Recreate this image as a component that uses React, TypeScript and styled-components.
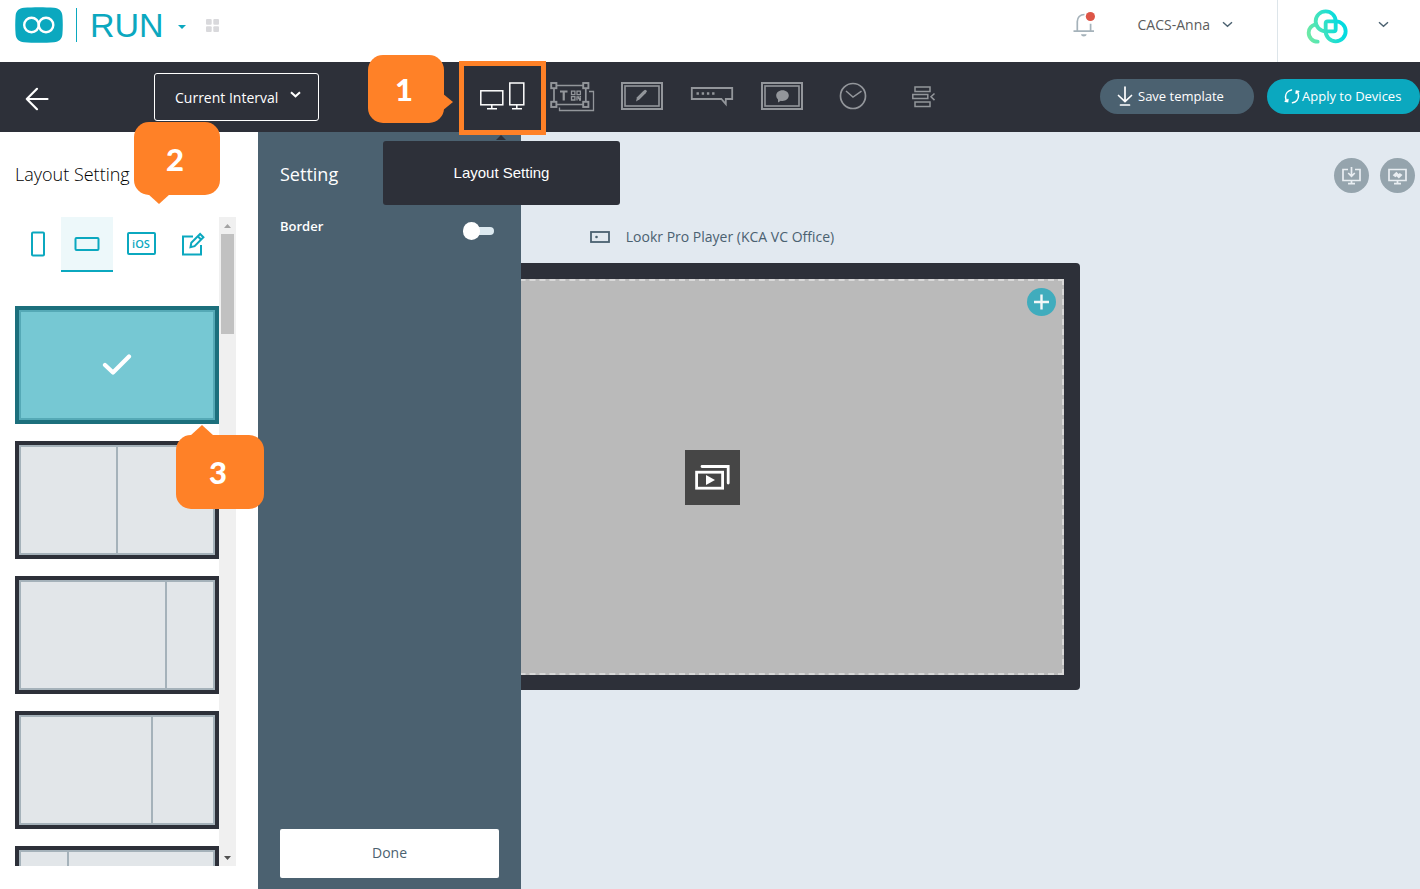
import React from "react";
import styled, { createGlobalStyle } from "styled-components";

const color = {
  teal: "#0ba8bf",
  dark: "#2d3039",
  slate: "#4b6170",
  stage: "#e2e9f0",
  orange: "#ff8127",
  tool: "#93969b",
};

const GlobalStyle = createGlobalStyle`
  *, *::before, *::after { box-sizing: border-box; }
  body { margin: 0; font-family: "Open Sans", "Noto Sans", sans-serif; background: #fff; }
  button, select, input { font-family: inherit; margin: 0; }
  button { border: 0; padding: 0; background: none; cursor: pointer; }
  svg { display: block; flex: none; }
  h2, p { margin: 0; font-weight: 400; }
`;

const Page = styled.div`
  display: flex;
  flex-direction: column;
  height: 100vh;
  overflow: hidden;
`;

const Header = styled.header`
  display: flex;
  align-items: flex-start;
  flex: none;
  height: 62px;
  padding-left: 15px;
`;

const Brand = styled.a`
  display: flex;
  align-items: center;
  height: 50px;
  color: ${color.teal};
  text-decoration: none;
`;

const BrandName = styled.span`
  margin-left: 13px;
  padding-left: 13px;
  border-left: 1px solid ${color.teal};
  font: 34px/34px "Liberation Sans", Arial, sans-serif;
`;

const HeaderIcon = styled.button<{ $gap?: number }>`
  display: flex;
  align-items: center;
  height: 50px;
  margin-left: ${(p) => p.$gap ?? 0}px;
`;

const HeaderStart = styled.div`
  display: flex;
  flex: 1;
  align-items: center;
`;

const Account = styled.button`
  display: flex;
  align-items: center;
  gap: 12px;
  height: 48px;
  margin: 0 44px 0 43px;
  color: #5c5c5c;
  font-size: 14px;
`;

const Workspace = styled.button`
  display: flex;
  align-items: flex-start;
  justify-content: space-between;
  width: 143px;
  height: 62px;
  padding: 8px 31px 0 28px;
  border-left: 1px solid #dde5ea;
`;

const ChevronSlot = styled.span`
  display: flex;
  padding-top: 13px;
`;

const Toolbar = styled.div`
  display: grid;
  grid-template-columns: 1fr auto 1fr;
  flex: none;
  align-items: center;
  height: 70px;
  padding-left: 4px;
  background: ${color.dark};
`;

const ToolbarStart = styled.div`
  display: flex;
  align-items: center;
  padding-left: 20px;
`;

const BackButton = styled.button`
  display: flex;
  align-items: center;
  height: 48px;
  margin-right: 104px;
  padding-top: 4px;
`;

const SelectBox = styled.label`
  position: relative;
`;

const Select = styled.select`
  display: block;
  width: 165px;
  height: 48px;
  padding: 0 20px;
  appearance: none;
  border: 1px solid #fff;
  border-radius: 3px;
  background: transparent;
  color: #fff;
  font-size: 14px;
  font-weight: 500;
`;

const SelectArrow = styled.span`
  position: absolute;
  top: 18px;
  right: 18px;
  pointer-events: none;
`;

const Tools = styled.nav`
  display: flex;
`;

const ToolItem = styled.div`
  position: relative;
`;

const ToolButton = styled.button`
  display: flex;
  align-items: center;
  justify-content: center;
  width: 70px;
  height: 70px;
`;

const Highlight = styled.span`
  position: absolute;
  top: -1px;
  left: -8px;
  z-index: 6;
  width: 87px;
  height: 74px;
  border: 5px solid ${color.orange};
  pointer-events: none;
`;

const Tooltip = styled.div`
  position: absolute;
  top: 79px;
  left: -84px;
  z-index: 5;
  width: 237px;
  border-radius: 3px;
  background: ${color.dark};
  color: #fff;
  font: 15px/64px "Liberation Sans", Arial, sans-serif;
  text-align: center;

  &::before {
    content: "";
    position: absolute;
    top: -6px;
    left: 113px;
    border: 5px solid transparent;
    border-top: 0;
    border-bottom-color: ${color.dark};
  }
`;

const tails = {
  right: "top: 38px; left: 100%; margin-left: -2px; border-width: 9px 0 9px 11px; border-left-color: currentColor;",
  down: "top: 100%; left: 14px; margin-top: -1px; border-width: 10px 11px 0 11px; border-top-color: currentColor;",
  up: "bottom: 100%; left: 14px; margin-bottom: -1px; border-width: 0 12px 11px 12px; border-bottom-color: currentColor;",
};

const CalloutBox = styled.div<{ $x: number; $y: number; $w: number; $h: number; $tail: keyof typeof tails }>`
  position: absolute;
  top: ${(p) => p.$y}px;
  left: ${(p) => p.$x}px;
  z-index: 6;
  display: flex;
  align-items: center;
  justify-content: center;
  width: ${(p) => p.$w}px;
  height: ${(p) => p.$h}px;
  padding-right: 4px;
  border-radius: 15px;
  background: ${color.orange};
  color: ${color.orange};

  &::after {
    content: "";
    position: absolute;
    border: 0 solid transparent;
    ${(p) => tails[p.$tail]}
  }
`;

const CalloutNumber = styled.span`
  color: #fff;
  font: 900 31px/40px Lato, sans-serif;
`;

const ToolbarEnd = styled.div`
  display: flex;
  justify-content: flex-end;
  gap: 13px;
  padding-bottom: 2px;
`;

const PillButton = styled.button<{ $primary?: boolean }>`
  display: flex;
  align-items: center;
  gap: ${(p) => (p.$primary ? 2 : 5)}px;
  width: ${(p) => (p.$primary ? 153 : 154)}px;
  height: 35px;
  padding-left: 17px;
  border-radius: 18px;
  background: ${(p) => (p.$primary ? color.teal : color.slate)};
  color: #fff;
  font-size: 13px;
  font-weight: 500;
  white-space: nowrap;
`;

const Workbench = styled.div`
  display: grid;
  grid-template-columns: 258px 263px 1fr;
  grid-template-rows: minmax(0, 1fr);
  flex: 1;
  min-height: 0;
`;

const Stage = styled.main`
  grid-area: 1 / 1 / 2 / 4;
  display: flex;
  flex-direction: column;
  align-items: center;
  padding: 26px 0 0 4px;
  background: ${color.stage};
`;

const StageActions = styled.div`
  display: flex;
  align-self: flex-end;
  gap: 11px;
  padding-right: 5px;
`;

const RoundButton = styled.button`
  display: flex;
  align-items: center;
  justify-content: center;
  width: 35px;
  height: 35px;
  border-radius: 50%;
  background: #95a4ad;
`;

const PlayerName = styled.p`
  display: flex;
  align-items: center;
  gap: 16px;
  margin: 34px 0 16px;
  color: ${color.slate};
  font-size: 14px;
  line-height: 20px;
`;

const Bezel = styled.section`
  width: 736px;
  max-width: 100%;
  padding: 16px 16px 15px;
  border-radius: 4px;
  background: ${color.dark};
`;

const Screen = styled.div`
  position: relative;
  display: flex;
  align-items: center;
  justify-content: center;
  aspect-ratio: 16 / 9;
  border: 2px dashed #d8d8d8;
  background: #bababa;
`;

const AddButton = styled.button`
  position: absolute;
  top: 7px;
  right: 6px;
  display: flex;
  align-items: center;
  justify-content: center;
  width: 29px;
  height: 28px;
  border-radius: 50%;
  background: #40acbd;
`;

const MediaTile = styled.button`
  display: flex;
  align-items: center;
  justify-content: center;
  width: 55px;
  height: 55px;
  background: #464646;
`;

const Sidebar = styled.aside`
  grid-area: 1 / 1;
  position: relative;
  display: flex;
  flex-direction: column;
  padding: 30px 22px 23px 15px;
  background: #fff;
`;

const PanelTitle = styled.h2<{ $light?: boolean }>`
  margin-bottom: ${(p) => (p.$light ? 30 : 31)}px;
  color: ${(p) => (p.$light ? "#fff" : "#000")};
  font-size: 18px;
  font-weight: ${(p) => (p.$light ? 400 : 300)};
  line-height: 24px;
`;

const ScrollArea = styled.div`
  display: flex;
  flex: 1;
  min-height: 0;
`;

const ScrollContent = styled.div`
  flex: 1;
  overflow: hidden;
`;

const ScrollTrack = styled.div`
  display: flex;
  flex-direction: column;
  align-items: center;
  width: 17px;
  background: #f0f0f0;
`;

const ScrollEnd = styled.span`
  display: flex;
  align-items: center;
  justify-content: center;
  height: 17px;

  &:last-child { margin-top: auto; }
`;

const ScrollThumb = styled.span`
  width: 13px;
  height: 100px;
  background: #c1c1c1;
`;

const Tabs = styled.div`
  display: grid;
  grid-template-columns: 46px 52px 1fr 50px;
  margin-bottom: 34px;
`;

const Tab = styled.button<{ $active?: boolean }>`
  display: flex;
  align-items: center;
  justify-content: center;
  height: 55px;
  border-bottom: 2px solid ${(p) => (p.$active ? color.teal : "transparent")};
  background: ${(p) => (p.$active ? "#edf8fa" : "transparent")};
`;

const IosBadge = styled.span`
  width: 29px;
  border: 2px solid ${color.teal};
  border-radius: 2px;
  color: ${color.teal};
  font-size: 11px;
  font-weight: 600;
  line-height: 19px;
`;

const LayoutList = styled.div`
  display: flex;
  flex-direction: column;
  gap: 17px;
`;

const LayoutThumb = styled.button<{ $selected?: boolean }>`
  position: relative;
  display: flex;
  flex: none;
  gap: 2px;
  height: 118px;
  padding: 2px;
  border: 4px solid ${(p) => (p.$selected ? "#1c6f7c" : color.dark)};
  background: ${(p) => (p.$selected ? "#55a9b6" : "#a5b2ba")};
`;

const Zone = styled.span<{ $share: number; $selected?: boolean }>`
  display: flex;
  align-items: center;
  justify-content: center;
  flex: ${(p) => p.$share} 1 0;
  align-self: stretch;
  background: ${(p) => (p.$selected ? "#76c8d3" : "#e2e6e9")};
`;

const SettingPanel = styled.section`
  grid-area: 1 / 2;
  position: relative;
  display: flex;
  flex-direction: column;
  padding: 30px 22px 11px;
  background: ${color.slate};
  color: #fff;
`;

const SettingRow = styled.label`
  display: flex;
  justify-content: space-between;
  padding-right: 5px;
  font-size: 13px;
  font-weight: 600;
  line-height: 20px;
`;

const Switch = styled.input`
  position: relative;
  width: 24px;
  height: 8px;
  margin-top: 11px;
  appearance: none;
  border-radius: 4px;
  background: #dce9f0;

  &::before {
    content: "";
    position: absolute;
    top: -5px;
    left: -7px;
    width: 17px;
    height: 18px;
    border-radius: 9px;
    background: #fff;
  }

  &:checked::before { left: 14px; }
`;

const DoneButton = styled.button`
  height: 49px;
  margin-top: auto;
  padding-bottom: 2px;
  border-radius: 2px;
  background: #fff;
  color: ${color.slate};
  font-size: 14px;
`;

const Chevron = ({ tint = "#4b6170", width = 1.4 }: { tint?: string; width?: number }) => (
  <svg width="11" height="7" viewBox="0 0 11 7" fill="none" stroke={tint} strokeWidth={width}>
    <path d="M1 1.2 5.5 5.3 10 1.2" />
  </svg>
);

const Callout = ({ n, ...box }: { n: number; $x: number; $y: number; $w: number; $h: number; $tail: keyof typeof tails }) => (
  <CalloutBox {...box}>
    <CalloutNumber>{n}</CalloutNumber>
  </CalloutBox>
);

const ToolSvg = ({ tint = color.tool, children }: { tint?: string; children: React.ReactNode }) => (
  <svg width="46" height="32" viewBox="0 0 46 32" fill="none" stroke={tint} strokeWidth="1.5">
    {children}
  </svg>
);

const DisplayFrame = () => (
  <>
    <rect x="3" y="2" width="40" height="26" strokeWidth="2" />
    <rect x="6" y="5" width="34" height="20" strokeWidth="1.6" />
  </>
);

const tools = [
  {
    name: "Layout Setting",
    icon: (
      <ToolSvg tint="#fff">
        <rect x="1.8" y="9.8" width="22" height="14" />
        <path d="M12.8 24v3M8 27.7h10" />
        <rect x="30.8" y="2" width="14" height="21.8" />
        <path d="M37.8 24v3M33 27.7h10" />
      </ToolSvg>
    ),
  },
  {
    name: "Text",
    icon: (
      <ToolSvg>
        <path d="M10.500 26.500v3h34V10.500H40" strokeWidth="1.300" />
        <path d="M8 4.500h26M8 23.500h26M5 8v12M36.800 8v12" strokeWidth="1.700" />
        <rect x="2.200" y="2" width="5.200" height="5.200" strokeWidth="1.900" />
        <rect x="34.200" y="2" width="5.200" height="5.200" strokeWidth="1.900" />
        <rect x="2.200" y="20.800" width="5.200" height="5.200" strokeWidth="1.900" />
        <rect x="34.200" y="20.800" width="5.200" height="5.200" strokeWidth="1.900" />
        <path d="M11 10.500h7.500M14.750 10v9.500" strokeWidth="2.200" />
        <path
          d="M22.500 10.200h3.400v3.400h-3.400zM28 10.200h3.400v3.400H28zM22.500 15.600h3.400V19h-3.400zM28 19.500v-3.700h1.700v1.700H32M31.400 15v1.500M30 19h2"
          strokeWidth="1.300"
        />
      </ToolSvg>
    ),
  },
  {
    name: "Draw",
    icon: (
      <ToolSvg>
        <DisplayFrame />
        <path d="m17 20.500 1-4.300 6-6 2-1.400q1.500 0 2 1.500l-1.300 2-6 6z" fill={color.tool} stroke="none" />
      </ToolSvg>
    ),
  },
  {
    name: "Ticker",
    icon: (
      <ToolSvg>
        <path d="M2.8 7h40.400v11h-6.400v5l-4.400-5H2.8z" strokeWidth="1.8" />
        <path d="M7.5 12.500h18" strokeWidth="2.400" strokeDasharray="2.400 2.800" />
      </ToolSvg>
    ),
  },
  {
    name: "Social",
    icon: (
      <ToolSvg>
        <DisplayFrame />
        <path
          d="M23.500 9.200c3.600 0 6.300 2.400 6.300 5.400s-2.700 5.400-6.300 5.400c-.6 0-1.200 0-1.700-.2L19 21.500v-3c-1.100-1-1.800-2.400-1.800-3.900 0-3 2.700-5.400 6.300-5.400z"
          fill={color.tool}
          stroke="none"
        />
      </ToolSvg>
    ),
  },
  {
    name: "Schedule",
    icon: (
      <ToolSvg>
        <circle cx="24" cy="15" r="12.500" strokeWidth="1.700" />
        <path d="m17 10 7 6 8.500-5.800" />
      </ToolSvg>
    ),
  },
  {
    name: "Arrange",
    icon: (
      <ToolSvg>
        <rect x="16" y="6" width="15" height="4.500" />
        <rect x="13.800" y="13.500" width="15" height="4" />
        <rect x="16" y="21" width="15" height="4.500" />
        <path d="m35.500 12.500-3.500 3.300 3.500 3.300" />
      </ToolSvg>
    ),
  },
];

const layouts = [
  { name: "Full screen", zones: [1], selected: true },
  { name: "Two halves", zones: [1, 1] },
  { name: "Wide left", zones: [143, 46] },
  { name: "Medium left", zones: [130, 60] },
  { name: "Narrow left", zones: [46, 144] },
];

export default function App() {
  return (
    <>
      <GlobalStyle />
      <Page>
        <Header>
          <HeaderStart>
            <Brand href="#" aria-label="RUN home">
              <svg width="48" height="36" viewBox="0 0 48 36" fill="none">
                <path d="M9 .7C18 0 30 0 39 .7c5 .4 8 3 8.400 8 .5 6 .5 12.600 0 18.600-.4 5-3.400 7.600-8.400 8-9 .7-21 .7-30 0-5-.4-8-3-8.400-8-.5-6-.5-12.600 0-18.600.4-5 3.400-7.600 8.400-8z" fill={color.teal} />
                <circle cx="16.500" cy="18" r="7.300" stroke="#fff" strokeWidth="2.400" />
                <circle cx="31" cy="18" r="7.300" stroke="#fff" strokeWidth="2.400" />
              </svg>
              <BrandName>RUN</BrandName>
            </Brand>
            <HeaderIcon $gap={14} aria-label="Switch product">
              <svg width="8" height="8" viewBox="0 0 8 8">
                <path d="M0 4h8L4 8z" fill={color.teal} />
              </svg>
            </HeaderIcon>
            <HeaderIcon $gap={20} aria-label="All apps">
              <svg width="13" height="13" viewBox="0 0 13 13" fill="#d9d9dc">
                <rect width="5.700" height="5.700" rx="1" />
                <rect x="7.300" width="5.700" height="5.700" rx="1" />
                <rect y="7.300" width="5.700" height="5.700" rx="1" />
                <rect x="7.300" y="7.300" width="5.700" height="5.700" rx="1" />
              </svg>
            </HeaderIcon>
          </HeaderStart>
          <HeaderIcon aria-label="Notifications">
            <svg width="22" height="38" viewBox="0 0 22 38" fill="none" stroke="#a5b2ba" strokeWidth="1.700">
              <path d="M11.500 8.500C7 8.500 4.300 11.500 4.300 15.500V25M17.600 17.800V25M.5 25.200h20.500" />
              <path d="M8 28.200h5.600c-.3 3-5.300 3-5.600 0z" fill="#a5b2ba" stroke="none" />
              <circle cx="17.400" cy="10.500" r="4.600" fill="#dd5547" stroke="none" />
            </svg>
          </HeaderIcon>
          <Account>
            CACS-Anna
            <Chevron />
          </Account>
          <Workspace aria-label="Workspace">
            <svg width="43" height="37" viewBox="769 23 129 111" fill="none" stroke="url(#ring)" strokeWidth="11.500" strokeLinecap="round">
              <defs>
                <linearGradient id="ring" gradientUnits="userSpaceOnUse" x1="775" y1="100" x2="870" y2="70">
                  <stop offset="0" stopColor="#6ce9a6" />
                  <stop offset="1" stopColor="#04dbe0" />
                </linearGradient>
              </defs>
              <path d="M828 33a30 30 0 0 1 30 30v24a6 6 0 0 1-6 6h-24a30 30 0 0 1-30-30 30 30 0 0 1 30-30z" />
              <path d="M834 63h24a30 30 0 1 1-30 30v-24a6 6 0 0 1 6-6z" />
              <path d="M804 124a27 27 0 0 1-27-27c0-11 8-21 20-25" />
            </svg>
            <ChevronSlot>
              <Chevron />
            </ChevronSlot>
          </Workspace>
        </Header>

        <Toolbar>
          <ToolbarStart>
            <BackButton aria-label="Back">
              <svg width="26" height="24" viewBox="0 0 26 24" fill="none" stroke="#fff" strokeWidth="2.200" strokeLinecap="round" strokeLinejoin="round">
                <path d="M13 1.800 2.800 12 13 22.200M2.800 12H23.500" />
              </svg>
            </BackButton>
            <SelectBox>
              <Select aria-label="Interval" defaultValue="current">
                <option value="current">Current Interval</option>
              </Select>
              <SelectArrow>
                <Chevron tint="#fff" width={2} />
              </SelectArrow>
            </SelectBox>
          </ToolbarStart>
          <Tools aria-label="Template tools">
            {tools.map((tool, i) => (
              <ToolItem key={tool.name}>
                <ToolButton aria-label={tool.name}>{tool.icon}</ToolButton>
                {i === 0 && (
                  <>
                    <Highlight />
                    <Tooltip role="tooltip">Layout Setting</Tooltip>
                    <Callout n={1} $x={-99} $y={-7} $w={76} $h={68} $tail="right" />
                  </>
                )}
              </ToolItem>
            ))}
          </Tools>
          <ToolbarEnd>
            <PillButton>
              <svg width="16" height="20" viewBox="0 0 16 20" fill="none" stroke="#fff" strokeWidth="1.700" strokeLinecap="round">
                <path d="M8 1v14.500M1.500 9.500 8 15.500l6.500-6M3.500 19h9" />
              </svg>
              Save template
            </PillButton>
            <PillButton $primary>
              <svg width="16" height="16" viewBox="0 0 16 16" fill="none" stroke="#fff" strokeWidth="1.500" strokeLinecap="round">
                <path d="M7.500 2C4 2.600 1.500 5.500 1.500 9c0 1.700.6 3.300 1.700 4.500M1.200 13.300l2.400.4.300-2.200" />
                <path d="M8.500 14.800c3.500-.6 6-3.500 6-7 0-1.700-.6-3.300-1.700-4.500M14.800 3.500l-2.400-.4-.3 2.200" />
              </svg>
              Apply to Devices
            </PillButton>
          </ToolbarEnd>
        </Toolbar>

        <Workbench>
          <Stage>
            <StageActions>
              <RoundButton aria-label="Download to screen">
                <svg width="19" height="18" viewBox="0 0 19 18" fill="none" stroke="#e9eef2" strokeWidth="1.700">
                  <path d="M6 2.500H1v11h17v-11h-5M9.500 14v2.500M6 16.600h7M9.500 0v9M6.200 6l3.300 3.300L12.800 6" />
                </svg>
              </RoundButton>
              <RoundButton aria-label="Refresh screen">
                <svg width="19" height="18" viewBox="0 0 19 18" fill="none" stroke="#e9eef2" strokeWidth="1.700">
                  <path d="M1 2.500h17v11H1zM9.500 14v2.500M6 16.600h7" />
                  <path d="m4.700 8.200 3.700-3.400 2.200 2.300 1.200-1.100 2.700 2-3.700 3.400-2.200-2.200-1.200 1.100z" fill="#e9eef2" stroke="none" />
                </svg>
              </RoundButton>
            </StageActions>
            <PlayerName>
              <svg width="20" height="12" viewBox="0 0 20 12" fill="none" stroke={color.slate} strokeWidth="1.800">
                <rect x="1" y="1" width="18" height="10" />
                <circle cx="6.500" cy="6" r="1.300" fill={color.slate} stroke="none" />
              </svg>
              Lookr Pro Player (KCA VC Office)
            </PlayerName>
            <Bezel>
              <Screen>
                <MediaTile aria-label="Edit playlist">
                  <svg width="35" height="26" viewBox="0 0 35 26" fill="none" stroke="#fff" strokeWidth="2.800">
                    <rect x="1.600" y="8.200" width="26" height="16" />
                    <path d="M7 2.500h26.200V19" strokeLinecap="round" />
                    <path d="M11 11v10l9-5z" fill="#fff" stroke="none" />
                  </svg>
                </MediaTile>
                <AddButton aria-label="Add content">
                  <svg width="15" height="16" viewBox="0 0 15 16" stroke="#f3f7f8" strokeWidth="2.400">
                    <path d="M7.500 .5v15M0 8h15" />
                  </svg>
                </AddButton>
              </Screen>
            </Bezel>
          </Stage>

          <Sidebar>
            <PanelTitle>Layout Setting</PanelTitle>
            <ScrollArea>
              <ScrollContent>
                <Tabs>
                  <Tab aria-label="Portrait">
                    <svg width="14" height="26" viewBox="0 0 14 26" fill="none" stroke={color.teal} strokeWidth="2">
                      <rect x="1" y="1.500" width="12" height="23" rx="1" />
                    </svg>
                  </Tab>
                  <Tab $active aria-label="Landscape">
                    <svg width="26" height="14" viewBox="0 0 26 14" fill="none" stroke={color.teal} strokeWidth="2">
                      <rect x="1.500" y="1" width="23" height="12" rx="1" />
                    </svg>
                  </Tab>
                  <Tab>
                    <IosBadge>iOS</IosBadge>
                  </Tab>
                  <Tab aria-label="Custom layout">
                    <svg width="26" height="24" viewBox="0 0 26 24" fill="none" stroke={color.teal} strokeWidth="2">
                      <path d="M12 4.500H2v18h18V13" />
                      <path d="m9.500 15.200.8-4.400 8.800-8.800 3.300 3.300-8.800 8.800zM17 4.500l3 3" />
                    </svg>
                  </Tab>
                </Tabs>
                <LayoutList>
                  {layouts.map((layout) => (
                    <LayoutThumb key={layout.name} $selected={layout.selected} aria-label={layout.name}>
                      {layout.zones.map((share, i) => (
                        <Zone key={i} $share={share} $selected={layout.selected}>
                          {layout.selected && (
                            <svg width="30" height="22" viewBox="0 0 30 22" fill="none" stroke="#fff" strokeWidth="4.200" strokeLinecap="round" strokeLinejoin="round">
                              <path d="m3 11 8 7.500L27 2.500" />
                            </svg>
                          )}
                        </Zone>
                      ))}
                    </LayoutThumb>
                  ))}
                </LayoutList>
              </ScrollContent>
              <ScrollTrack aria-hidden="true">
                <ScrollEnd>
                  <svg width="7" height="4" viewBox="0 0 7 4">
                    <path d="M0 4h7L3.500 0z" fill="#a3a3a3" />
                  </svg>
                </ScrollEnd>
                <ScrollThumb />
                <ScrollEnd>
                  <svg width="7" height="4" viewBox="0 0 7 4">
                    <path d="M0 0h7L3.500 4z" fill="#505050" />
                  </svg>
                </ScrollEnd>
              </ScrollTrack>
            </ScrollArea>
            <Callout n={2} $x={134} $y={-10} $w={86} $h={73} $tail="down" />
            <Callout n={3} $x={176} $y={303} $w={88} $h={74} $tail="up" />
          </Sidebar>

          <SettingPanel>
            <PanelTitle $light>Setting</PanelTitle>
            <SettingRow>
              Border
              <Switch type="checkbox" />
            </SettingRow>
            <DoneButton>Done</DoneButton>
          </SettingPanel>
        </Workbench>
      </Page>
    </>
  );
}
